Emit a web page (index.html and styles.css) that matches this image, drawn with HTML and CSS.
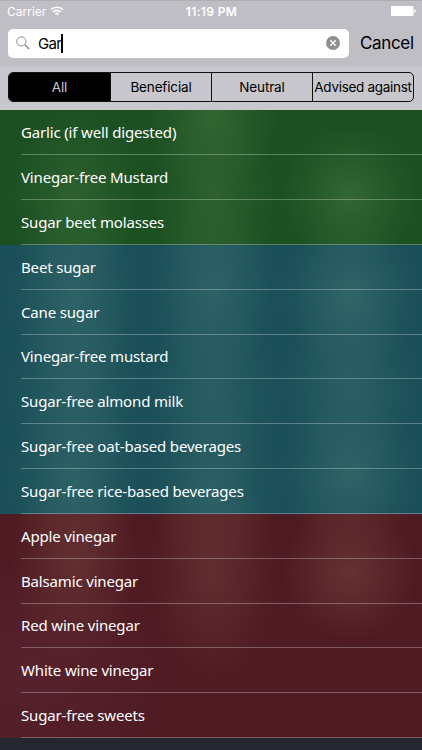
FILE: index.html
```
<!DOCTYPE html>
<html lang="en">
<head>
    <meta charset="UTF-8">
    <meta name="viewport" content="width=device-width, initial-scale=1.0">
    <title>Food Search</title>
    <link rel="stylesheet" href="styles.css">
</head>
<body>
    <header class="header">
        <div class="statusbar">
            <div class="carrier">
                <span>Carrier</span>
                <svg class="wifi" viewBox="0 0 14 10" width="14" height="10">
                    <path d="M1 3.7a8.6 8.6 0 0 1 12 0M3.2 6a5.4 5.4 0 0 1 7.6 0" fill="none" stroke="#fff" stroke-width="1.7"/>
                    <path d="M4.9 7.4a3 3 0 0 1 4.2 0L7 9.6z" fill="#fff"/>
                </svg>
            </div>
            <div class="time">11:19 PM</div>
            <div class="status-right">
                <svg viewBox="0 0 25 10" width="25" height="10">
                    <rect x="0" y="0" width="22.5" height="10" rx="1" fill="#fff"/>
                    <path d="M23.3 3.4a1.6 1.6 0 0 1 0 3.2z" fill="#fff"/>
                </svg>
            </div>
        </div>
        <div class="searchbar">
            <div class="search-field">
                <svg class="search-icon" viewBox="0 0 14 14" width="14" height="14">
                    <circle cx="5.4" cy="5.4" r="4.6" fill="none" stroke="#8e8e93" stroke-width="1"/>
                    <path d="M8.8 8.8l4.4 4.2" stroke="#8e8e93" stroke-width="1.5"/>
                </svg>
                <span class="search-text">Gar</span>
                <span class="cursor"></span>
                <svg class="clear-icon" viewBox="0 0 14 14" width="14" height="14">
                    <circle cx="7" cy="7" r="7" fill="#8e8e93"/>
                    <path d="M4.3 4.3l5.4 5.4M9.7 4.3l-5.4 5.4" stroke="#fff" stroke-width="1.4"/>
                </svg>
            </div>
            <a class="cancel">Cancel</a>
        </div>
        <div class="scope">
            <div class="segment active">All</div>
            <div class="segment">Beneficial</div>
            <div class="segment">Neutral</div>
            <div class="segment advised">Advised against</div>
        </div>
    </header>

    <main class="results">
        <ul class="group beneficial">
            <li>Garlic (if well digested)</li>
            <li>Vinegar-free Mustard</li>
            <li>Sugar beet molasses</li>
        </ul>
        <ul class="group neutral">
            <li>Beet sugar</li>
            <li>Cane sugar</li>
            <li>Vinegar-free mustard</li>
            <li>Sugar-free almond milk</li>
            <li>Sugar-free oat-based beverages</li>
            <li>Sugar-free rice-based beverages</li>
        </ul>
        <ul class="group against">
            <li>Apple vinegar</li>
            <li>Balsamic vinegar</li>
            <li>Red wine vinegar</li>
            <li>White wine vinegar</li>
            <li>Sugar-free sweets</li>
        </ul>
    </main>
</body>
</html>
```

FILE: styles.css
```
* {
    box-sizing: border-box;
}
body {
    margin: 0;
    height: 750px;
    overflow: hidden;
    font-family: Inter, "Liberation Sans", sans-serif;
    background-color: #242630;
}
.header {
    height: 110.4px;
    background: linear-gradient(#bfbec5 0, #bfbec5 65px, #c8c7cd 66px);
    border-top: 1px solid #afaeb4;
}
.statusbar {
    display: grid;
    grid-template-columns: 1fr auto 1fr;
    align-items: center;
    height: 20px;
    padding: 0 6px 0 7px;
    color: #fff;
    font-size: 12px;
}
.carrier {
    display: flex;
    align-items: center;
    gap: 4px;
}
.time {
    font-weight: 600;
    letter-spacing: 0.35px;
}
.status-right {
    display: flex;
    justify-content: flex-end;
}
.searchbar {
    display: flex;
    align-items: center;
    height: 44px;
    padding: 0 8px;
}
.search-field {
    display: flex;
    flex-shrink: 0;
    align-items: center;
    width: 341px;
    height: 29px;
    padding: 0 9px 0 8px;
    background-color: #fff;
    border-radius: 5px;
}
.search-text {
    margin-left: 8px;
    font-size: 15px;
    letter-spacing: -0.7px;
}
.cursor {
    width: 2px;
    height: 19px;
    background-color: #000;
}
.clear-icon {
    margin-left: auto;
}
.cancel {
    margin-left: 11px;
    font-size: 17px;
    letter-spacing: -0.35px;
    white-space: nowrap;
}
.scope {
    display: grid;
    grid-template-columns: repeat(4, minmax(0, 1fr));
    height: 30px;
    margin: 7px 8px 0;
    border: 1px solid #111;
    border-radius: 5px;
    overflow: hidden;
}
.segment {
    display: flex;
    align-items: center;
    justify-content: center;
    border-left: 1px solid #111;
    font-size: 13.5px;
    letter-spacing: -0.15px;
    white-space: nowrap;
}
.segment.active {
    background-color: #000;
    border-left: none;
    color: #c8c7cd;
}
.advised {
    letter-spacing: -0.3px;
}
/* blurred lights showing through the coloured groups */
.results {
    background-color: #1c202a;
    background-image:
        radial-gradient(65px 85px at 75px 85px, rgba(150, 160, 130, 0.7), transparent),
        radial-gradient(65px 100px at 75px 185px, rgba(150, 160, 130, 0.75), transparent),
        radial-gradient(65px 100px at 75px 280px, rgba(150, 160, 130, 0.6), transparent),
        radial-gradient(65px 100px at 75px 370px, rgba(150, 160, 130, 0.65), transparent),
        radial-gradient(65px 100px at 75px 455px, rgba(150, 160, 130, 0.75), transparent),
        radial-gradient(65px 75px at 213px 5px, rgba(150, 160, 130, 0.85), transparent),
        radial-gradient(65px 90px at 213px 85px, rgba(150, 160, 130, 0.7), transparent),
        radial-gradient(65px 90px at 213px 180px, rgba(150, 160, 130, 0.75), transparent),
        radial-gradient(65px 100px at 213px 285px, rgba(150, 160, 130, 0.6), transparent),
        radial-gradient(65px 90px at 213px 380px, rgba(150, 160, 130, 0.6), transparent),
        radial-gradient(65px 110px at 213px 465px, rgba(150, 160, 130, 0.7), transparent),
        radial-gradient(68px 70px at 350px 85px, rgba(150, 160, 130, 0.9), transparent),
        radial-gradient(68px 80px at 350px 185px, rgba(150, 160, 130, 0.85), transparent),
        radial-gradient(68px 85px at 350px 275px, rgba(150, 160, 130, 0.65), transparent),
        radial-gradient(68px 80px at 350px 365px, rgba(150, 160, 130, 0.8), transparent),
        radial-gradient(68px 70px at 350px 462px, rgba(150, 160, 130, 0.9), transparent),
        radial-gradient(140px 110px at 30px 560px, rgba(90, 90, 130, 0.6), transparent);
}
.group {
    margin: 0;
    padding: 0 0 0 21px;
    list-style: none;
}
.group li {
    display: flex;
    align-items: center;
    height: 44.84px;
    border-bottom: 1px solid rgba(255, 255, 255, 0.28);
    color: #fff;
    font-family: "Noto Sans", sans-serif;
    font-size: 15px;
    letter-spacing: -0.16px;
}
.beneficial {
    background-color: rgba(29, 91, 32, 0.8);
}
.neutral {
    background-color: rgba(28, 91, 101, 0.8);
}
.against {
    background-color: rgba(92, 26, 34, 0.8);
}
```
